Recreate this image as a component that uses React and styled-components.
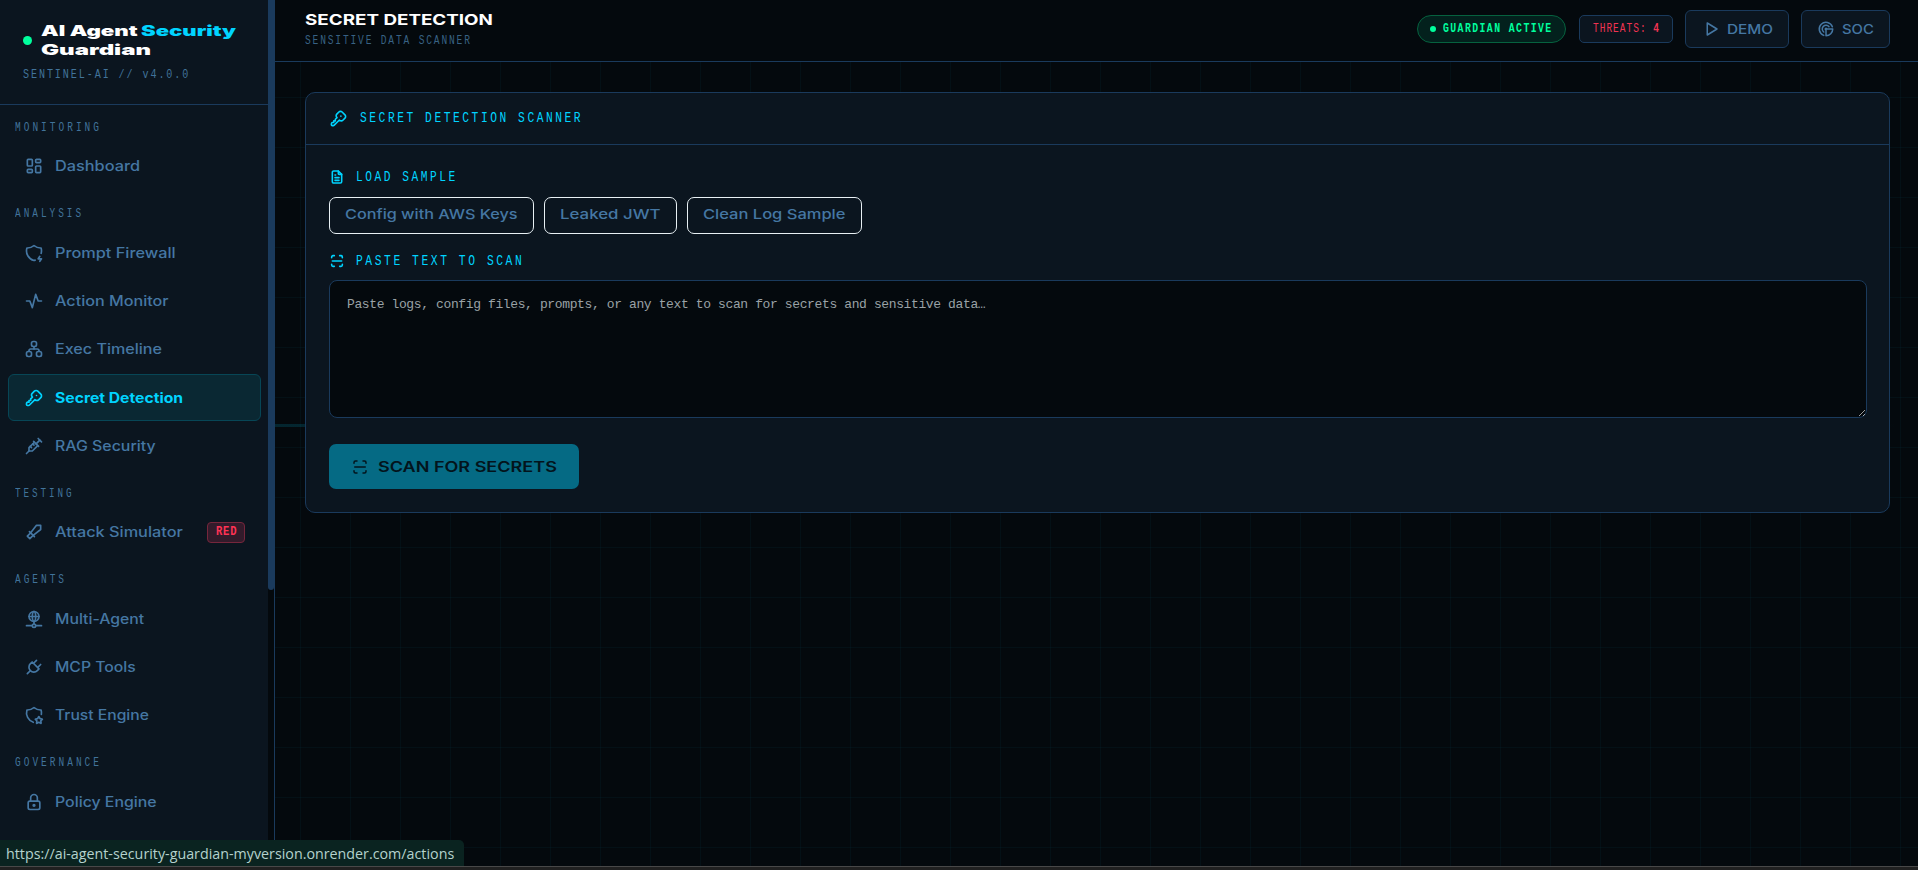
import React, { useLayoutEffect, useRef, useState } from 'react';
import styled, { createGlobalStyle } from 'styled-components';
import {
  TbLayoutDashboard,
  TbShieldBolt,
  TbActivity,
  TbSitemap,
  TbKey,
  TbVaccine,
  TbSword,
  TbNetwork,
  TbPlug,
  TbShieldStar,
  TbLock,
  TbPlayerPlay,
  TbRadar,
  TbFileText,
  TbScan,
} from 'react-icons/tb';

const SECTIONS = [
  {
    title: 'MONITORING',
    width: 87,
    items: [{ label: 'Dashboard', icon: TbLayoutDashboard, width: 85 }],
  },
  {
    title: 'ANALYSIS',
    width: 69,
    items: [
      { label: 'Prompt Firewall', icon: TbShieldBolt, width: 121 },
      { label: 'Action Monitor', icon: TbActivity, width: 113 },
      { label: 'Exec Timeline', icon: TbSitemap, width: 107 },
      { label: 'Secret Detection', icon: TbKey, width: 128, active: true },
      { label: 'RAG Security', icon: TbVaccine, width: 101 },
    ],
  },
  {
    title: 'TESTING',
    width: 60,
    items: [{ label: 'Attack Simulator', icon: TbSword, width: 128, badge: 'RED' }],
  },
  {
    title: 'AGENTS',
    width: 52,
    items: [
      { label: 'Multi-Agent', icon: TbNetwork, width: 89 },
      { label: 'MCP Tools', icon: TbPlug, width: 81 },
      { label: 'Trust Engine', icon: TbShieldStar, width: 94 },
    ],
  },
  {
    title: 'GOVERNANCE',
    width: 87,
    items: [{ label: 'Policy Engine', icon: TbLock, width: 102 }],
  },
];

const SAMPLES = [
  { label: 'Config with AWS Keys', width: 173 },
  { label: 'Leaked JWT', width: 101 },
  { label: 'Clean Log Sample', width: 143 },
];

// Stretches or squeezes its text horizontally to the given width
const FitText = ({ width, children }) => {
  const ref = useRef(null);
  const [scale, setScale] = useState(1);

  useLayoutEffect(() => {
    setScale(width / ref.current.offsetWidth);
  }, [width, children]);

  return (
    <FitBox style={{ width }}>
      <FitInner ref={ref} style={{ transform: `scaleX(${scale})` }}>
        {children}
      </FitInner>
    </FitBox>
  );
};

const Sidebar = () => (
  <SidebarContainer>
    <SidebarContent>
      <Brand>
        <BrandRow>
          <BrandDot />
          <BrandName>
            <div>
              <FitText width={96}>AI Agent</FitText>
              <Accent>
                <FitText width={95}>Security</FitText>
              </Accent>
            </div>
            <FitText width={110}>Guardian</FitText>
          </BrandName>
        </BrandRow>
        <BrandVersion>
          <FitText width={167}>SENTINEL-AI // v4.0.0</FitText>
        </BrandVersion>
      </Brand>
      <nav>
        {SECTIONS.map((section) => (
          <div key={section.title}>
            <SectionTitle>
              <FitText width={section.width}>{section.title}</FitText>
            </SectionTitle>
            {section.items.map(({ label, icon: Icon, width, active, badge }) => (
              <NavItem key={label} $active={active}>
                <Icon size={20} />
                <FitText width={width}>{label}</FitText>
                {badge && (
                  <NavBadge>
                    <FitText width={21}>{badge}</FitText>
                  </NavBadge>
                )}
              </NavItem>
            ))}
          </div>
        ))}
      </nav>
    </SidebarContent>
    <ScrollTrack>
      <ScrollThumb />
    </ScrollTrack>
  </SidebarContainer>
);

const Topbar = () => (
  <TopbarContainer>
    <div>
      <PageTitle>
        <FitText width={188}>SECRET DETECTION</FitText>
      </PageTitle>
      <PageSubtitle>
        <FitText width={167}>SENSITIVE DATA SCANNER</FitText>
      </PageSubtitle>
    </div>
    <TopbarActions>
      <StatusPill>
        <StatusDot />
        <FitText width={110}>GUARDIAN ACTIVE</FitText>
      </StatusPill>
      <ThreatCount>
        <FitText width={67}>
          THREATS: <b>4</b>
        </FitText>
      </ThreatCount>
      <TopButton $width={104}>
        <TbPlayerPlay size={18} />
        <FitText width={46}>DEMO</FitText>
      </TopButton>
      <TopButton $width={89}>
        <TbRadar size={18} />
        <FitText width={32}>SOC</FitText>
      </TopButton>
    </TopbarActions>
  </TopbarContainer>
);

const App = () => (
  <>
    <GlobalStyle />
    <Layout>
      <Sidebar />
      <Main>
        <Topbar />
        <ScanLine />
        <Card>
          <CardHeader>
            <TbKey size={19} />
            <FitText width={223}>SECRET DETECTION SCANNER</FitText>
          </CardHeader>
          <CardBody>
            <FieldLabel>
              <TbFileText size={16} strokeWidth={2.4} />
              <FitText width={102}>LOAD SAMPLE</FitText>
            </FieldLabel>
            <SampleRow>
              {SAMPLES.map((sample) => (
                <SampleButton key={sample.label}>
                  <FitText width={sample.width}>{sample.label}</FitText>
                </SampleButton>
              ))}
            </SampleRow>
            <FieldLabel>
              <TbScan size={16} strokeWidth={2.4} />
              <FitText width={168}>PASTE TEXT TO SCAN</FitText>
            </FieldLabel>
            <ScanInput placeholder="Paste logs, config files, prompts, or any text to scan for secrets and sensitive data…" />
            <ScanButton>
              <TbScan size={18} />
              <FitText width={179}>SCAN FOR SECRETS</FitText>
            </ScanButton>
          </CardBody>
        </Card>
      </Main>
      <LinkPreview>
        <FitText width={448}>https://ai-agent-security-guardian-myversion.onrender.com/actions</FitText>
      </LinkPreview>
      <WindowEdge />
    </Layout>
  </>
);

export default App;

const mono = `'Liberation Mono', monospace`;
const sans = `Inter, 'Liberation Sans', sans-serif`;

const GlobalStyle = createGlobalStyle`
  * {
    box-sizing: border-box;
  }

  body {
    margin: 0;
    background: #04090d;
    font-family: ${sans};
    overflow: hidden;
  }

  button, textarea {
    font: inherit;
  }

  svg {
    flex-shrink: 0;
  }
`;

const FitBox = styled.span`
  display: inline-block;
  flex-shrink: 0;
  white-space: nowrap;
  text-align: left;
`;

const FitInner = styled.span`
  display: inline-block;
  transform-origin: left center;
`;

const Layout = styled.div`
  position: relative;
  display: flex;
  height: 870px;
  overflow: hidden;
  background-color: #04090d;
  background-image:
    linear-gradient(rgba(0, 212, 255, 0.035) 1px, transparent 1px),
    linear-gradient(90deg, rgba(0, 212, 255, 0.035) 1px, transparent 1px);
  background-size: 50px 50px;
  background-position: 0 -3px;
`;

const SidebarContainer = styled.aside`
  display: flex;
  width: 275px;
  flex-shrink: 0;
  background: #0b151f;
  border-right: 1px solid #1a3a5c;
`;

const SidebarContent = styled.div`
  width: 268px;
`;

const ScrollTrack = styled.div`
  width: 6px;
  background: #04090d;
`;

const ScrollThumb = styled.div`
  height: 590px;
  background: #1a3a5c;
  border-radius: 0 0 3px 3px;
`;

const Brand = styled.div`
  height: 105px;
  padding: 21px 23px 0;
  border-bottom: 1px solid #1a3a5c;
`;

const BrandRow = styled.div`
  display: flex;
  align-items: center;
  gap: 9px;
`;

const BrandDot = styled.span`
  width: 9px;
  height: 9px;
  border-radius: 50%;
  background: #00ff9d;
`;

const BrandName = styled.div`
  color: #fff;
  font-size: 14.4px;
  font-weight: 900;
  line-height: 19px;

  > div {
    display: flex;
    gap: 4px;
  }
`;

const Accent = styled.span`
  color: #00d4ff;
`;

const BrandVersion = styled.div`
  margin-top: 8px;
  color: #41739a;
  font-family: ${mono};
  font-size: 13px;
  letter-spacing: 2.5px;
  line-height: 16px;
`;

const SectionTitle = styled.div`
  height: 37.9px;
  padding: 15px 15px 0;
  color: #41739a;
  font-family: ${mono};
  font-size: 12.5px;
  letter-spacing: 4px;
  line-height: 16px;
`;

const NavItem = styled.div`
  display: flex;
  align-items: center;
  gap: 11px;
  height: 46.8px;
  margin: 0 7px 1.6px 8px;
  padding: 0 15px 0 14.5px;
  border: 1px solid ${({ $active }) => ($active ? '#074656' : 'transparent')};
  border-radius: 6px;
  background: ${({ $active }) => ($active ? '#0a2833' : 'transparent')};
  color: ${({ $active }) => ($active ? '#00d4ff' : '#4577a3')};
  font-size: 14px;
  font-weight: ${({ $active }) => ($active ? 700 : 500)};
  line-height: 20px;
`;

const NavBadge = styled.span`
  display: flex;
  align-items: center;
  justify-content: center;
  width: 38px;
  height: 21px;
  margin-left: auto;
  border: 1px solid #76263c;
  border-radius: 4px;
  background: #331b2b;
  color: #ff3355;
  font-family: ${mono};
  font-size: 13px;
  font-weight: 700;
  letter-spacing: 1px;
  line-height: 16px;
`;

const Main = styled.main`
  flex: 1;
  min-width: 0;
`;

const TopbarContainer = styled.header`
  display: flex;
  justify-content: space-between;
  height: 62px;
  padding: 0 28px 0 30px;
  background: #04090d;
  border-bottom: 1px solid #1a3a5c;
`;

const PageTitle = styled.div`
  margin-top: 9px;
  color: #fff;
  font-size: 15px;
  font-weight: 700;
  line-height: 21px;
`;

const PageSubtitle = styled.div`
  margin-top: 3px;
  color: #386284;
  font-family: ${mono};
  font-size: 13px;
  letter-spacing: 2.5px;
  line-height: 16px;
`;

const TopbarActions = styled.div`
  display: flex;
  align-items: center;
  gap: 12px;
  height: 58px;
`;

const StatusPill = styled.div`
  display: flex;
  align-items: center;
  gap: 7px;
  width: 149px;
  height: 28px;
  margin-right: 1px;
  padding-left: 12px;
  border: 1px solid #06623f;
  border-radius: 14px;
  background: #03211d;
  color: #00ff9d;
  font-family: ${mono};
  font-size: 12.5px;
  font-weight: 700;
  letter-spacing: 1.8px;
  line-height: 14px;
`;

const StatusDot = styled.span`
  width: 6px;
  height: 6px;
  border-radius: 50%;
  background: #00ff9d;
`;

const ThreatCount = styled.div`
  display: flex;
  align-items: center;
  width: 94px;
  height: 28px;
  padding-left: 13px;
  border: 1px solid #1a3a5c;
  border-radius: 5px;
  background: #0b151f;
  color: #ef3352;
  font-family: ${mono};
  font-size: 12.5px;
  letter-spacing: 1.3px;
  line-height: 14px;
`;

const TopButton = styled.button`
  display: flex;
  align-items: center;
  justify-content: center;
  gap: 7px;
  width: ${({ $width }) => $width}px;
  height: 38px;
  padding: 0;
  border: 1px solid #1a3a5c;
  border-radius: 6px;
  background: #0b151f;
  color: #4577a3;
  font-size: 13px;
  font-weight: 500;
`;

const ScanLine = styled.div`
  position: absolute;
  top: 424px;
  left: 275px;
  right: 0;
  height: 3px;
  background: linear-gradient(90deg, rgba(0, 212, 255, 0.14), transparent);
`;

const Card = styled.section`
  position: relative;
  height: 421px;
  margin: 30px 28px 0 30px;
  border: 1px solid #1a3a5c;
  border-radius: 10px;
  background: #0b151f;
`;

const CardHeader = styled.div`
  display: flex;
  align-items: center;
  gap: 12px;
  height: 52px;
  padding: 0 23px 1px;
  border-bottom: 1px solid #1a3a5c;
  color: #00d4ff;
  font-family: ${mono};
  font-size: 15.5px;
  letter-spacing: 3.5px;
  line-height: 18px;
`;

const CardBody = styled.div`
  padding: 22px 22px 0 23px;
`;

const FieldLabel = styled.div`
  display: flex;
  align-items: center;
  gap: 11px;
  height: 20px;
  color: #00d4ff;
  font-family: ${mono};
  font-size: 15.5px;
  letter-spacing: 3.5px;
  line-height: 18px;
`;

const SampleRow = styled.div`
  display: flex;
  gap: 10px;
  margin: 10px 0 17px;
`;

const SampleButton = styled.button`
  height: 37px;
  padding: 0 15px 3px;
  border: 1px solid #e8f0f4;
  border-radius: 7px;
  background: transparent;
  color: #4577a3;
  font-size: 13.5px;
  font-weight: 500;
`;

const ScanInput = styled.textarea`
  display: block;
  width: 100%;
  height: 138px;
  margin-top: 9px;
  padding: 15px 17px;
  border: 1px solid #1a3a5c;
  border-radius: 8px;
  outline: none;
  background: #04090d;
  color: #d5e3ea;
  font-family: ${mono};
  font-size: 13px;
  letter-spacing: -0.38px;
  line-height: 18px;
  resize: vertical;

  &::placeholder {
    color: #9aa2a6;
  }
`;

const ScanButton = styled.button`
  display: flex;
  align-items: center;
  gap: 9px;
  width: 250px;
  height: 45px;
  margin-top: 26px;
  padding: 0 22px;
  border: 0;
  border-radius: 7px;
  background: #056a84;
  color: #03141c;
  font-size: 14.5px;
  font-weight: 600;
`;

const LinkPreview = styled.div`
  position: absolute;
  left: 0;
  bottom: 4px;
  width: 464px;
  height: 26px;
  padding-left: 6px;
  border-radius: 0 5px 0 0;
  background: #0a2320;
  color: #b4d2cd;
  font-family: 'Open Sans', sans-serif;
  font-size: 14.5px;
  line-height: 27px;
`;

const WindowEdge = styled.div`
  position: absolute;
  left: 0;
  right: 0;
  bottom: 0;
  height: 4px;
  border-top: 1px solid #484848;
  background: #202020;
`;
